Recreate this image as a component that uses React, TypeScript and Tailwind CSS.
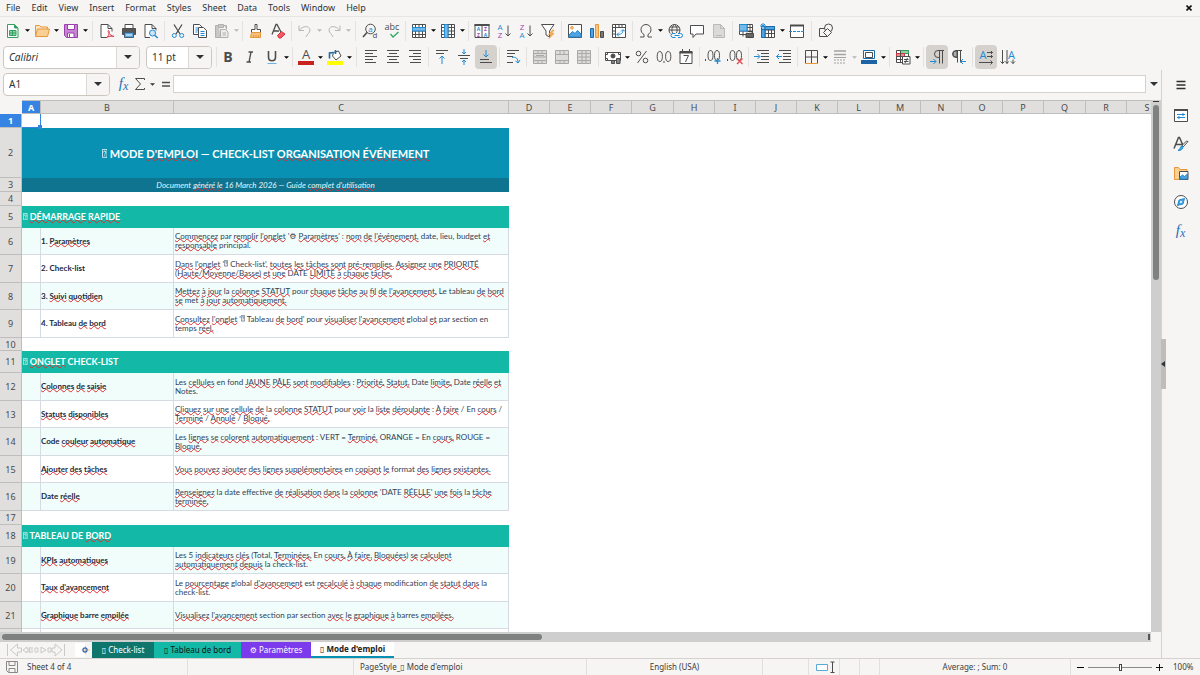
import { ReactNode } from 'react';
import { clsx } from 'clsx';

const INK = '#4d4d4d';
const BLUE = '#1e8bd4';
const ORANGE = '#e8973a';
const PURPLE = '#a33fb5';

const MENUS = ['File', 'Edit', 'View', 'Insert', 'Format', 'Styles', 'Sheet', 'Data', 'Tools', 'Window', 'Help'];

interface GlyphProps {
  children: ReactNode;
  className?: string;
}

function Glyph({ children, className }: GlyphProps) {
  return (
    <svg
      viewBox="0 0 16 16"
      className={clsx('size-4 shrink-0 overflow-visible', className)}
      fill="none"
      stroke={INK}
      strokeWidth="1"
      aria-hidden="true"
    >
      {children}
    </svg>
  );
}

interface LetterProps {
  x: number;
  y: number;
  size: number;
  fill?: string;
  bold?: boolean;
  children: ReactNode;
}

function Letter({ x, y, size, fill = INK, bold = false, children }: LetterProps) {
  return (
    <text
      x={x}
      y={y}
      fontSize={size}
      fill={fill}
      stroke="none"
      textAnchor="middle"
      fontWeight={bold ? 700 : 400}
      fontFamily="'Open Sans', 'Noto Sans', sans-serif"
    >
      {children}
    </text>
  );
}

const FX = (
  <Glyph>
    <text x="7.5" y="12" fontSize="15" fontStyle="italic" fill="#1c71b8" stroke="none" textAnchor="middle" fontFamily="'Liberation Serif', serif">
      f<tspan fontSize="12" dy="2">x</tspan>
    </text>
  </Glyph>
);

const ICONS: Record<string, ReactNode> = {
  new: (
    <Glyph>
      <path d="M2.5 1.5h7l3.500 3.500v9.500h-10.500z" fill="#fff" stroke="#33a060" />
      <path d="M9.500 1.500v3.500h3.500" fill="#33a060" stroke="#33a060" />
      <path d="M4.500 7.500h6.500v5h-6.500zM4.500 10h6.500M7.500 7.500v5" fill="#8fd3a9" stroke="#33a060" />
    </Glyph>
  ),
  open: (
    <Glyph>
      <path d="M1.500 12.500v-10h4l1.500 1.500h6.500v2.500" fill="#fbe3c0" stroke={ORANGE} />
      <path d="M1.500 13.500l2-7.500h12l-2 7.500z" fill="#f9cf94" stroke={ORANGE} />
    </Glyph>
  ),
  save: (
    <Glyph>
      <path d="M1.500 1.500h13v13h-11l-2-2z" fill="#c983d5" stroke="#9a3fac" />
      <path d="M4.500 1.500h7v5h-7zM4.500 14v-4h6.500v4" fill="#fff" stroke="#9a3fac" />
      <path d="M6.500 11v3" stroke="#9a3fac" />
    </Glyph>
  ),
  pdf: (
    <Glyph>
      <path d="M8 14.500h-6v-13h7l4 4v3" fill="#fff" />
      <path d="M9 1.500v4h4" />
      <path d="M7.500 14.500c3-2 3.500-7 2-7s.500 5 5.500 6c-2-1-6 0-7.500 1z" stroke="#dc3545" />
    </Glyph>
  ),
  print: (
    <Glyph>
      <path d="M4 5.500v-4h8v4" fill="#fff" />
      <path d="M1.500 5.500h13v6h-13z" fill="#555" />
      <path d="M3.500 9.500h9v5h-9z" fill="#5aa5dc" stroke="#3d5f78" />
      <path d="M5 12h6" stroke="#fff" />
    </Glyph>
  ),
  preview: (
    <Glyph>
      <path d="M7 14.500h-5v-13h7l4 4v2" fill="#fff" />
      <path d="M9 1.500v4h4" />
      <circle cx="9.500" cy="10" r="3" stroke={BLUE} fill="#cfe6f7" />
      <path d="M11.700 12.200l3 2.800" stroke={BLUE} strokeWidth="1.500" />
    </Glyph>
  ),
  cut: (
    <Glyph>
      <path d="M4 1.500l6 9.500M12 1.500l-6 9.500" strokeWidth="1.300" />
      <circle cx="4.300" cy="12.500" r="2" stroke={BLUE} />
      <circle cx="11.700" cy="12.500" r="2" stroke={BLUE} />
    </Glyph>
  ),
  copy: (
    <Glyph>
      <path d="M1.500 1.500h6l2.500 2.500v7.500h-8.500z" fill="#fff" />
      <path d="M3.500 5h3M3.500 7h3M3.500 9h2" stroke={BLUE} />
      <path d="M6.500 4.500h5l3 3v7h-8z" fill="#fff" />
      <path d="M8.500 8.500h4M8.500 10.500h4M8.500 12.500h4" stroke={BLUE} />
    </Glyph>
  ),
  paste: (
    <Glyph>
      <path d="M5 2.500h-3.500v12h5M10 2.500h2.500v4M4.500 1.500h5v3h-5z" fill="#c9c7c5" stroke="#b1afad" />
      <path d="M6.500 6.500h5l2.500 2.500v5.500h-7.500zM8.500 10h3.500M8.500 12h3.500" fill="#ededec" stroke="#b1afad" />
    </Glyph>
  ),
  clone: (
    <Glyph>
      <path d="M7 1.500h2v5h3.500v3h-9v-3h3.500z" fill="#fff" />
      <path d="M3.500 9.500h9v5h-10z" fill="#f6c17f" stroke={ORANGE} />
      <path d="M5.500 14v-2M8 14v-2M10.500 14v-2" stroke={ORANGE} />
    </Glyph>
  ),
  clear: (
    <Glyph>
      <path d="M2 11.500l4-10h1l4 7.500M4 8h5" strokeWidth="1.300" />
      <path d="M7.500 12.500l4-4 3.500 2.500-4 4h-2z" fill="#ef5b66" stroke="#d8323f" />
    </Glyph>
  ),
  undo: (
    <Glyph>
      <path d="M2 2.500v5h5M2.500 7c3-4 10-5 10.500 0 0 3-3 4-4 7" stroke="#b8b6b4" />
    </Glyph>
  ),
  redo: (
    <Glyph>
      <path d="M14 2.500v5h-5M13.500 7c-3-4-10-5-10.500 0 0 3 3 4 4 7" stroke="#b8b6b4" />
    </Glyph>
  ),
  find: (
    <Glyph>
      <circle cx="8.500" cy="6" r="4.800" />
      <path d="M5 9.500l-4 4.500" strokeWidth="1.600" />
      <Letter x={8.500} y={8.500} size={8} fill={BLUE}>a</Letter>
      <Letter x={13} y={15} size={8}>d</Letter>
    </Glyph>
  ),
  spell: (
    <Glyph>
      <Letter x={8} y={7} size={9}>abc</Letter>
      <path d="M6.500 11l2.500 3 5.500-5" stroke="#2fa866" strokeWidth="1.300" />
    </Glyph>
  ),
  row: (
    <Glyph>
      <path d="M1.500 1.500h13v13h-13zM1.500 4.500h13M1.500 8h13M1.500 11.500h13M4.500 1.500v13M8 1.500v13M11.500 1.500v13" fill="#fff" />
      <path d="M1.500 4.500h13v3.500h-13z" fill="#74b9ea" stroke={BLUE} />
    </Glyph>
  ),
  column: (
    <Glyph>
      <path d="M1.500 1.500h13v13h-13zM1.500 4.500h13M1.500 8h13M1.500 11.500h13M4.500 1.500v13M8 1.500v13M11.500 1.500v13" fill="#fff" />
      <path d="M4.500 1.500h3.500v13h-3.500z" fill="#74b9ea" stroke={BLUE} />
    </Glyph>
  ),
  sort: (
    <Glyph>
      <path d="M1 1.500h14v13h-14zM8 2v12.500" fill="#fff" />
      <path d="M.5 2h15" strokeWidth="2" />
      <Letter x={4.500} y={8} size={5} fill={BLUE} bold>A</Letter>
      <Letter x={4.500} y={14} size={5} fill={PURPLE} bold>Z</Letter>
      <Letter x={11.500} y={8} size={5} fill={PURPLE} bold>Z</Letter>
      <Letter x={11.500} y={14} size={5} fill={BLUE} bold>A</Letter>
    </Glyph>
  ),
  sortAsc: (
    <Glyph>
      <Letter x={4} y={6.500} size={8} fill={BLUE}>A</Letter>
      <Letter x={4} y={15} size={8} fill={PURPLE}>Z</Letter>
      <path d="M12 2.500v10.500M9.500 10.500l2.500 2.500 2.500-2.500" />
    </Glyph>
  ),
  sortDesc: (
    <Glyph>
      <Letter x={4} y={6.500} size={8} fill={PURPLE}>Z</Letter>
      <Letter x={4} y={15} size={8} fill={BLUE}>A</Letter>
      <path d="M12 2.500v10.500M9.500 10.500l2.500 2.500 2.500-2.500" />
    </Glyph>
  ),
  filter: (
    <Glyph>
      <path d="M1.500 1.500h12.500l-4.500 6.500v6l-3.500-2v-4z" fill="#fff" />
      <path d="M12.500 7l-4 4.500h2.500l-2 4 5-5h-2.500l2.500-3.500z" fill="#f7b55e" stroke={ORANGE} strokeWidth=".7" />
    </Glyph>
  ),
  image: (
    <Glyph>
      <path d="M1.500 1.500h13v13h-13z" fill="#fff" />
      <path d="M2 14v-2l3.500-3.500 2.500 2 2.500-3 3.500 3.500v3z" fill="#4ea3e0" stroke={BLUE} />
      <circle cx="5" cy="4.800" r="1.300" stroke={ORANGE} fill="#f9cf94" />
    </Glyph>
  ),
  chart: (
    <Glyph>
      <path d="M1.500 5.500h3v9h-3z" fill="#4ea3e0" stroke="#1a6ba8" />
      <path d="M6.500 1.500h3v13h-3z" fill="#f7c583" stroke={ORANGE} />
      <path d="M11.500 8.500h3v6h-3z" fill="#777" />
    </Glyph>
  ),
  pivot: (
    <Glyph>
      <path d="M1.500 1.500h13v13h-13zM1.500 4.500h13M4.500 1.500v13M8 1.500v3M11 1.500v3M1.500 8h3M1.500 11h3" fill="#fff" />
      <path d="M6 11.500c4 0 6-1 6-4.500M10 8.500l2-2 2 2M8 9.500l-2 2 2 2" stroke={BLUE} />
    </Glyph>
  ),
  omega: (
    <Glyph>
      <path d="M2 14h4v-2.500c-2-1-3-3-3-5 0-3 2.200-5 5-5s5 2 5 5c0 2-1 4-3 5v2.500h4" />
    </Glyph>
  ),
  link: (
    <Glyph>
      <circle cx="7.500" cy="7" r="5.500" />
      <path d="M2 7h11M7.500 1.500c-3.500 3-3.500 8 0 11M7.500 1.500c3.500 3 3.500 8 0 11M3 4h9" />
      <rect x="3.500" y="10" width="13" height="5" fill="#f6f5f4" stroke="none" />
      <path d="M8.500 10.500h-2.500a2 2 0 000 4h2.500M11 10.500h2.500a2 2 0 010 4h-2.500M7.500 12.500h5" stroke={BLUE} />
    </Glyph>
  ),
  comment: (
    <Glyph>
      <path d="M1.500 2.500h13v8.500h-7.500l-3 3.500v-3.500h-2.500z" fill="#fff" />
    </Glyph>
  ),
  headers: (
    <Glyph>
      <path d="M2.500 1.500h7l4 4v9h-11z" fill="#dcdad8" stroke="#bbb9b7" />
      <path d="M9.500 1.500v4h4M5 12.500h6" stroke="#bbb9b7" />
    </Glyph>
  ),
  printArea: (
    <Glyph>
      <path d="M1.500 1.500h13v10h-13zM1.500 4.500h13M1.500 8h13M5 1.500v12M9 1.500v8M12 1.500v8" fill="#fff" />
      <path d="M1.500 1.500h7.500v6.500h-7.500z" fill="#74b9ea" stroke={BLUE} />
      <path d="M8 10.500h7.500v4h-7.500z" fill="#666" />
      <path d="M10 8.500h4v2M10 14.500h4" stroke="#444" />
    </Glyph>
  ),
  freeze: (
    <Glyph>
      <path d="M1.500 3.500h13v11h-13zM1.500 7h13M1.500 10.500h13M5 3.500v11M8.500 3.500v11M11.500 3.500v11" fill="#fff" />
      <path d="M5 3.500h9.500v3h-9.500zM1.500 6.500h3.500v8h-3.500z" fill="#4ea3e0" stroke="#1a6ba8" />
      <path d="M3 0v6M0 3h6M1 1l4 4M5 1l-4 4" stroke={BLUE} />
    </Glyph>
  ),
  split: (
    <Glyph>
      <path d="M1.500 2.500h13v12h-13z" fill="#fff" />
      <path d="M1 2.500h14" strokeWidth="2" />
      <path d="M0 8.500h16" stroke={BLUE} strokeDasharray="3 1" />
    </Glyph>
  ),
  shapes: (
    <Glyph>
      <path d="M1.500 5.500h8v8h-8z" fill="#f6f5f4" />
      <circle cx="10.500" cy="5" r="4" fill="#f6f5f4" />
      <path d="M9.500 5.500l4 4-4 4-4-4z" fill="#f6f5f4" />
    </Glyph>
  ),
  bold: <Glyph><Letter x={8} y={13} size={14} bold>B</Letter></Glyph>,
  italic: (
    <Glyph>
      <path d="M6.500 3h4.500M4.500 13h4.500M9 3l-2 10" strokeWidth="1.300" />
    </Glyph>
  ),
  underline: (
    <Glyph>
      <path d="M4.500 2v6c0 5 7 5 7 0v-6" strokeWidth="1.600" />
      <path d="M3.500 14.500h9" stroke="#6cb2e6" />
    </Glyph>
  ),
  fontColor: (
    <Glyph>
      <Letter x={8} y={10} size={13}>A</Letter>
      <path d="M0 14h16" stroke="#c9211e" strokeWidth="4" />
    </Glyph>
  ),
  fill: (
    <Glyph>
      <path d="M6.500 3.500l5-1.500 2.500 5-5 4-3.500-4z" fill="#fff" />
      <path d="M8.500 5v-4M2.500 9.500v-5.500l4-.5" stroke="#1a6ba8" strokeWidth="1.600" />
      <path d="M0 14h16" stroke="#ffff00" strokeWidth="4" />
    </Glyph>
  ),
  alignLeft: <Glyph><path d="M2 1.500h12M2 4.500h8M2 7.500h12M2 10.500h8M2 13.500h11" /></Glyph>,
  alignCenter: <Glyph><path d="M2 1.500h12M4 4.500h8M2 7.500h12M4 10.500h8M2 13.500h12" /></Glyph>,
  alignRight: <Glyph><path d="M2 1.500h12M6 4.500h8M2 7.500h12M6 10.500h8M3 13.500h11" /></Glyph>,
  vTop: (
    <Glyph>
      <path d="M2 1.500h12M2 4.500h8" />
      <path d="M8 15v-8M5.500 9.500l2.500-2.500 2.500 2.500" stroke={BLUE} />
    </Glyph>
  ),
  vMiddle: (
    <Glyph>
      <path d="M2 6.500h12M4 9.500h8" />
      <path d="M8 0v5M6 3l2 2 2-2M8 16v-5M6 13l2-2 2 2" stroke={BLUE} />
    </Glyph>
  ),
  vBottom: (
    <Glyph>
      <path d="M2 10.500h9M2 13.500h12" />
      <path d="M8 1v7M5.500 5.500l2.500 2.500 2.500-2.500" stroke={BLUE} />
    </Glyph>
  ),
  wrap: (
    <Glyph>
      <path d="M2 1.500h12M2 4.500h8M2 7.500h6M2 13.500h6" />
      <path d="M7 8.500c4-1 6 1 6 5M10.500 12l2.500 2 2-3" stroke={BLUE} />
    </Glyph>
  ),
  mergeCenter: (
    <Glyph>
      <path d="M1.500 1.500h13v13h-13zM1.500 4.500h13M1.500 11.500h13M6 1.500v3M10 1.500v3M6 11.500v3M10 11.500v3M1.500 8h13M4 6.500h8" fill="#dedcda" stroke="#aaa8a6" />
    </Glyph>
  ),
  merge: (
    <Glyph>
      <path d="M1.500 1.500h13v13h-13zM1.500 5.500h13M1.500 11.500h13M6 1.500v4M10 1.500v4M6 11.500v3M10 11.500v3" fill="#dedcda" stroke="#aaa8a6" />
    </Glyph>
  ),
  unmerge: (
    <Glyph>
      <path d="M1.500 1.500h13v13h-13zM1.500 4.500h13M1.500 8h13M1.500 11.500h13M6 1.500v13M10 1.500v13" fill="#dedcda" stroke="#aaa8a6" />
    </Glyph>
  ),
  currency: (
    <Glyph>
      <path d="M.5 3.500h15v8h-15z" fill="#fff" />
      <path d="M.5 5.500h2v-2M13.500 3.500v2h2M.5 9.500h2v2" />
      <circle cx="8" cy="7" r="2" fill={INK} />
      <path d="M6.500 14.500v-3h3v3zM11.500 14.500v-5h3.500v5z" fill="#888" />
    </Glyph>
  ),
  percent: (
    <Glyph>
      <circle cx="4.500" cy="4.500" r="2.300" />
      <circle cx="11.500" cy="11.500" r="2.300" />
      <path d="M12.500 2l-9 12" />
    </Glyph>
  ),
  number: (
    <Glyph>
      <ellipse cx="3.800" cy="7.500" rx="2.600" ry="5" />
      <ellipse cx="12.200" cy="7.500" rx="2.600" ry="5" />
      <path d="M8 12v2" />
    </Glyph>
  ),
  date: (
    <Glyph>
      <path d="M2 2.500h12v12h-12z" fill="#fff" />
      <path d="M1.500 3.500h13" strokeWidth="2" />
      <path d="M4.500 0v2M11.500 0v2" />
      <path d="M5.500 6.500h5l-3 6.500" />
    </Glyph>
  ),
  addDecimal: (
    <Glyph>
      <ellipse cx="5.500" cy="6.500" rx="2.500" ry="5" />
      <ellipse cx="12" cy="6.500" rx="2.500" ry="5" />
      <path d="M.5 10v2" />
      <path d="M12.500 9v6M9.500 12h6" stroke={BLUE} strokeWidth="1.300" />
    </Glyph>
  ),
  deleteDecimal: (
    <Glyph>
      <ellipse cx="5.500" cy="6.500" rx="2.500" ry="5" />
      <ellipse cx="12" cy="6.500" rx="2.500" ry="5" />
      <path d="M.5 10v2" />
      <path d="M10 9.500l5.500 5.500M15.500 9.500l-5.500 5.500" stroke="#e5484d" strokeWidth="1.300" />
    </Glyph>
  ),
  indent: (
    <Glyph>
      <path d="M3 1.500h12M7 4.500h8M7 7.500h8M7 10.500h8M3 13.500h12" />
      <path d="M0 7.500h5.500M3.500 5l2.500 2.500-2.500 2.500" stroke={BLUE} />
    </Glyph>
  ),
  outdent: (
    <Glyph>
      <path d="M3 1.500h12M7 4.500h8M7 7.500h8M7 10.500h8M3 13.500h12" />
      <path d="M6 7.500h-5.500M3 5l-2.500 2.500 2.500 2.500" stroke={BLUE} />
    </Glyph>
  ),
  borders: (
    <Glyph>
      <path d="M2.500 14v-12.500h12v12.500M8.500 1.500v12.500M2.500 8h12" />
      <path d="M2 14.500h13" stroke={ORANGE} />
    </Glyph>
  ),
  borderStyle: (
    <Glyph>
      <path d="M2 2h12M2 5.500h12" stroke="#a5a3a1" strokeWidth="1.500" />
      <path d="M2 8.500h12" stroke="#a5a3a1" />
      <path d="M2 11h12M2 14h12" stroke="#a5a3a1" strokeDasharray="2 1" />
    </Glyph>
  ),
  borderColor: (
    <Glyph>
      <path d="M2.500 1.500h11v8h-11z" fill="#fff" stroke="#1a6ba8" />
      <path d="M4.500 3.500h7v5h-7z" />
      <path d="M0 13h16" stroke="#1b63a5" strokeWidth="4" />
    </Glyph>
  ),
  conditional: (
    <Glyph>
      <path d="M1.500 1.500h12v12h-12z" fill="#fff" />
      <path d="M5.500 1.500h8v3h-8z" fill="#8ed0a0" stroke="#33a060" />
      <path d="M1.500 4.500h8v3h-8z" fill="#ef8a8f" stroke="#c9333f" />
      <path d="M1.500 7.500h8v3h-8zM5.500 1.500v12" />
      <path d="M7.500 7.500h7.500v7.500h-7.500z" fill="#fff" />
      <path d="M9 10.500h4.500M9 12.500h4.500M12.500 9l-2.500 5" />
    </Glyph>
  ),
  ltr: (
    <Glyph>
      <path d="M15 1.500h-6a3.500 3.500 0 000 7h1M10.500 1.500v13M13.500 1.500v13" />
      <path d="M1 12.500h6M4.500 10l2.500 2.500-2.500 2.500" stroke={BLUE} />
    </Glyph>
  ),
  rtl: (
    <Glyph>
      <path d="M11 1.500h-6a3.500 3.500 0 000 7h1M6.500 1.500v12M9.500 1.500v12" />
      <path d="M6 2h-1a3 3 0 000 6h1z" fill="#aaa" />
      <path d="M15 12.500h-5M12 10l-2.500 2.500 2.500 2.500" stroke={BLUE} />
    </Glyph>
  ),
  textLR: (
    <Glyph>
      <Letter x={5} y={10} size={11} fill={BLUE}>A</Letter>
      <path d="M9 3.500h5.500M13 2l1.500 1.500-1.500 1.500M9 7.500h5.500M13 6l1.500 1.500-1.500 1.500M1 13.500h13.500M12.500 11.500l2 2-2 2" />
    </Glyph>
  ),
  textTB: (
    <Glyph>
      <Letter x={11.500} y={10} size={11} fill={BLUE}>A</Letter>
      <path d="M2.500 1v13.500M.5 12.500l2 2 2-2M7 1v13.500M5.500 12.500l1.500 2 1.500-2M13 10.500v4M11 12.500l2 2 2-2" />
    </Glyph>
  ),
  properties: (
    <Glyph>
      <path d="M1.500 2.500h13v12h-13z" fill="#fff" />
      <path d="M1 3h14" strokeWidth="2" />
      <path d="M4 7.500h8M4 10.500h8M10 6v3M6 9v3" stroke={BLUE} />
    </Glyph>
  ),
  styles: (
    <Glyph>
      <path d="M1 12.500l4.500-11h1l4 9M3 8.500h6" strokeWidth="1.500" />
      <path d="M15 5.500l-4.500 5-1.500-1 4.500-4.500z" fill="#fff" />
      <path d="M10 10.500c0 3-2 4-5 4 2-1 2-3 3.500-4.500z" fill="#4ea3e0" stroke={BLUE} />
    </Glyph>
  ),
  gallery: (
    <Glyph>
      <path d="M1.500 14.500v-12h4l1.500 2h7v3h-6l-2 7z" fill="#f9cf94" stroke={ORANGE} />
      <path d="M6.500 6.500h8.500v8h-8.500z" fill="#fff" />
      <path d="M7 14v-2l2.500-2 2 1.500 3-2.500v5z" fill="#4ea3e0" stroke={BLUE} />
    </Glyph>
  ),
  navigator: (
    <Glyph>
      <circle cx="8" cy="8" r="6.500" fill="#fff" />
      <path d="M11.500 4.500l-1.500 5.500-5.500 1.500 1.500-5.500z" fill="#4ea3e0" stroke={BLUE} />
      <circle cx="8" cy="8" r="1" fill="#fff" stroke="none" />
    </Glyph>
  ),
  fx: FX,
  sum: (
    <Glyph>
      <path d="M12.500 4v-1.500h-9l5 5.500-5 5.500h9v-1.500" />
    </Glyph>
  ),
  equals: (
    <Glyph>
      <path d="M4 6.500h8M4 10h8" strokeWidth="1.600" />
    </Glyph>
  ),
  menu: (
    <Glyph>
      <path d="M3.500 4.500h9M3.500 8h9M3.500 11.500h9" stroke="#2e2e2e" strokeWidth="1.600" />
    </Glyph>
  ),
};

interface Tool {
  icon: string;
  label: string;
  menu?: boolean;
  disabled?: boolean;
  pressed?: boolean;
}

interface ToolGroup {
  tools: Tool[];
  wide?: boolean;
}

const STANDARD: ToolGroup[] = [
  {
    tools: [
      { icon: 'new', label: 'New', menu: true },
      { icon: 'open', label: 'Open', menu: true },
      { icon: 'save', label: 'Save', menu: true },
    ],
    wide: true,
  },
  {
    tools: [
      { icon: 'pdf', label: 'Export as PDF' },
      { icon: 'print', label: 'Print' },
      { icon: 'preview', label: 'Print Preview' },
    ],
  },
  {
    tools: [
      { icon: 'cut', label: 'Cut' },
      { icon: 'copy', label: 'Copy' },
      { icon: 'paste', label: 'Paste', menu: true, disabled: true },
    ],
  },
  {
    tools: [
      { icon: 'clone', label: 'Clone Formatting' },
      { icon: 'clear', label: 'Clear Formatting' },
    ],
  },
  {
    tools: [
      { icon: 'undo', label: 'Undo', menu: true, disabled: true },
      { icon: 'redo', label: 'Redo', menu: true, disabled: true },
    ],
    wide: true,
  },
  {
    tools: [
      { icon: 'find', label: 'Find and Replace' },
      { icon: 'spell', label: 'Spelling' },
    ],
  },
  {
    tools: [
      { icon: 'row', label: 'Row', menu: true },
      { icon: 'column', label: 'Column', menu: true },
    ],
  },
  {
    tools: [
      { icon: 'sort', label: 'Sort' },
      { icon: 'sortAsc', label: 'Sort Ascending' },
      { icon: 'sortDesc', label: 'Sort Descending' },
      { icon: 'filter', label: 'AutoFilter' },
    ],
  },
  {
    tools: [
      { icon: 'image', label: 'Insert Image' },
      { icon: 'chart', label: 'Insert Chart' },
      { icon: 'pivot', label: 'Pivot Table' },
    ],
  },
  {
    tools: [
      { icon: 'omega', label: 'Special Character', menu: true },
      { icon: 'link', label: 'Hyperlink' },
      { icon: 'comment', label: 'Comment' },
      { icon: 'headers', label: 'Headers and Footers', disabled: true },
    ],
  },
  {
    tools: [
      { icon: 'printArea', label: 'Define Print Area' },
      { icon: 'freeze', label: 'Freeze Rows and Columns', menu: true },
      { icon: 'split', label: 'Split Window' },
    ],
    wide: true,
  },
  { tools: [{ icon: 'shapes', label: 'Draw Functions' }] },
];

const FORMATTING: ToolGroup[] = [
  {
    tools: [
      { icon: 'bold', label: 'Bold' },
      { icon: 'italic', label: 'Italic' },
      { icon: 'underline', label: 'Underline', menu: true },
    ],
  },
  {
    tools: [
      { icon: 'fontColor', label: 'Font Color', menu: true },
      { icon: 'fill', label: 'Background Color', menu: true },
    ],
    wide: true,
  },
  {
    tools: [
      { icon: 'alignLeft', label: 'Align Left' },
      { icon: 'alignCenter', label: 'Align Center' },
      { icon: 'alignRight', label: 'Align Right' },
    ],
  },
  {
    tools: [
      { icon: 'vTop', label: 'Align Top' },
      { icon: 'vMiddle', label: 'Center Vertically' },
      { icon: 'vBottom', label: 'Align Bottom', pressed: true },
    ],
  },
  { tools: [{ icon: 'wrap', label: 'Wrap Text' }] },
  {
    tools: [
      { icon: 'mergeCenter', label: 'Merge and Center', disabled: true },
      { icon: 'merge', label: 'Merge Cells', disabled: true },
      { icon: 'unmerge', label: 'Unmerge Cells', disabled: true },
    ],
    wide: true,
  },
  {
    tools: [
      { icon: 'currency', label: 'Format as Currency', menu: true },
      { icon: 'percent', label: 'Format as Percent' },
      { icon: 'number', label: 'Format as Number' },
      { icon: 'date', label: 'Format as Date' },
    ],
  },
  {
    tools: [
      { icon: 'addDecimal', label: 'Add Decimal Place' },
      { icon: 'deleteDecimal', label: 'Delete Decimal Place' },
    ],
  },
  {
    tools: [
      { icon: 'indent', label: 'Increase Indent' },
      { icon: 'outdent', label: 'Decrease Indent' },
    ],
  },
  {
    tools: [
      { icon: 'borders', label: 'Borders', menu: true },
      { icon: 'borderStyle', label: 'Border Style', menu: true, disabled: true },
      { icon: 'borderColor', label: 'Border Color', menu: true },
    ],
  },
  { tools: [{ icon: 'conditional', label: 'Conditional', menu: true }] },
  {
    tools: [
      { icon: 'ltr', label: 'Left-To-Right', pressed: true },
      { icon: 'rtl', label: 'Right-To-Left' },
    ],
  },
  {
    tools: [
      { icon: 'textLR', label: 'Text direction from left to right', pressed: true },
      { icon: 'textTB', label: 'Text direction from top to bottom' },
    ],
  },
];

function Caret({ className }: { className?: string }) {
  return (
    <svg viewBox="0 0 8 4" className={clsx('shrink-0 fill-current', className)} aria-hidden="true">
      <path d="M0 0h8l-4 4z" />
    </svg>
  );
}

function ToolButton({ icon, label, menu, disabled, pressed }: Tool) {
  return (
    <>
      <button
        type="button"
        aria-label={label}
        aria-pressed={pressed}
        disabled={disabled}
        className={clsx('flex h-6 w-[22px] shrink-0 items-center justify-center rounded', pressed && 'bg-[#d5d1cd]')}
      >
        {ICONS[icon]}
      </button>
      {menu && (
        <button
          type="button"
          aria-label={`${label} options`}
          disabled={disabled}
          className={clsx('flex h-6 w-[7px] shrink-0 items-center justify-center', disabled ? 'text-[#b8b6b4]' : 'text-black')}
        >
          <Caret className="h-[3px] w-[5px]" />
        </button>
      )}
    </>
  );
}

function Toolbar({ groups }: { groups: ToolGroup[] }) {
  return (
    <>
      {groups.map((group, i) => (
        <div key={i} className="flex shrink-0 items-center">
          {group.tools.map((tool) => (
            <ToolButton key={tool.icon} {...tool} />
          ))}
          {i < groups.length - 1 && (
            <div className={clsx('flex h-5 justify-center', group.wide ? 'w-[7px]' : 'w-[5px]')}>
              <div className="w-px bg-[#e4e2e0]" />
            </div>
          )}
        </div>
      ))}
    </>
  );
}

interface ComboProps {
  label: string;
  value: string;
  className: string;
  italic?: boolean;
}

function Combo({ label, value, className, italic }: ComboProps) {
  return (
    <div className={clsx('relative h-[23px] shrink-0 overflow-hidden rounded border border-[#cdc7c2] bg-white', className)}>
      <select
        aria-label={label}
        className={clsx('block h-[21px] w-full appearance-none bg-transparent pl-[5px] text-[10px] leading-[14px]', italic && 'italic')}
      >
        <option>{value}</option>
      </select>
      <div className="pointer-events-none absolute inset-y-0 right-0 flex w-[23px] items-center justify-center border-l border-[#dcd8d5] bg-[#f6f5f4]">
        <Caret className="h-1 w-2" />
      </div>
    </div>
  );
}

function Missing() {
  return (
    <svg viewBox="0 0 5 8" className="inline-block h-[0.8em] w-[0.5em] fill-none stroke-current align-baseline" aria-hidden="true">
      <path d="M.4.400h4.200v7.200h-4.200z" strokeWidth=".7" />
      <path d="M1.500 3c0-1.500 2-1.500 2 0 0 1-1 1-1 2M2.500 5.700v.8" strokeWidth=".8" />
    </svg>
  );
}

// Text between tildes is flagged by the spell checker, ^ is a glyph that the font lacks.
function Spelled({ text }: { text: string }) {
  const nodes: ReactNode[] = [];
  let flagged = false;

  text.split(/([~^])/).forEach((part, i) => {
    if (part === '~') {
      flagged = !flagged;
    } else if (part === '^') {
      nodes.push(<Missing key={i} />);
    } else if (flagged) {
      nodes.push(
        <span
          key={i}
          className="underline decoration-[#e02b2b] decoration-wavy decoration-1 [text-decoration-skip-ink:none] [text-underline-offset:-1px]"
        >
          {part}
        </span>
      );
    } else {
      nodes.push(part);
    }
  });

  return <>{nodes}</>;
}

interface Row {
  height: string;
  kind: 'blank' | 'title' | 'subtitle' | 'section' | 'item';
  tinted?: boolean;
  label?: string;
  lines?: string[];
}

const ROWS: Row[] = [
  { height: 'h-[14px]', kind: 'blank' },
  { height: 'h-[50px]', kind: 'title', label: "^ MODE ~D'EMPLOI~ — CHECK-LIST ~ORGANISATION~ ~ÉVÉNEMENT~" },
  { height: 'h-[14px]', kind: 'subtitle', label: "Document ~généré~ ~le~ 16 March 2026 — Guide ~complet~ ~d'utilisation~" },
  { height: 'h-[14px]', kind: 'blank' },
  { height: 'h-[22px]', kind: 'section', label: '^ ~DÉMARRAGE~ ~RAPIDE~' },
  {
    height: 'h-[27px]', kind: 'item', tinted: true, label: '1. ~Paramètres~',
    lines: ["~Commencez~ par ~remplir~ ~l'onglet~ '⚙ ~Paramètres~' : ~nom~ ~de~ ~l'événement,~ date, lieu, budget ~et~", '~responsable~ principal.'],
  },
  {
    height: 'h-[28px]', kind: 'item', label: '2. Check-list',
    lines: ["~Dans~ ~l'onglet~ '^ Check-list', ~toutes~ ~les~ ~tâches~ ~sont~ ~pré-remplies.~ ~Assignez~ ~une~ ~PRIORITÉ~", '(~Haute/Moyenne/Basse)~ ~et~ ~une~ DATE ~LIMITE~ ~à~ ~chaque~ ~tâche.~'],
  },
  {
    height: 'h-[27px]', kind: 'item', tinted: true, label: '3. ~Suivi~ ~quotidien~',
    lines: ["~Mettez~ ~à~ ~jour~ la ~colonne~ ~STATUT~ pour ~chaque~ ~tâche~ ~au~ ~fil~ ~de~ ~l'avancement.~ Le tableau ~de~ ~bord~", '~se~ met ~à~ ~jour~ ~automatiquement.~'],
  },
  {
    height: 'h-[28px]', kind: 'item', label: '4. Tableau ~de~ ~bord~',
    lines: ["~Consultez~ ~l'onglet~ '^ Tableau ~de~ ~bord~' pour ~visualiser~ ~l'avancement~ global ~et~ par section en", 'temps ~réel.~'],
  },
  { height: 'h-[13px]', kind: 'blank' },
  { height: 'h-[22px]', kind: 'section', label: '^ ~ONGLET~ CHECK-LIST' },
  {
    height: 'h-[28px]', kind: 'item', tinted: true, label: '~Colonnes~ ~de~ ~saisie~',
    lines: ['Les ~cellules~ en fond ~JAUNE~ ~PÂLE~ ~sont~ ~modifiables~ : ~Priorité,~ ~Statut,~ Date ~limite,~ Date ~réelle~ ~et~', 'Notes.'],
  },
  {
    height: 'h-[27px]', kind: 'item', label: '~Statuts~ ~disponibles~',
    lines: ['~Cliquez~ ~sur~ ~une~ ~cellule~ ~de~ la ~colonne~ ~STATUT~ pour ~voir~ la ~liste~ ~déroulante~ : ~À~ ~faire~ / En ~cours~ /', '~Terminé~ / ~Annulé~ / ~Bloqué.~'],
  },
  {
    height: 'h-[28px]', kind: 'item', tinted: true, label: 'Code ~couleur~ ~automatique~',
    lines: ['Les ~lignes~ ~se~ ~colorent~ ~automatiquement~ : VERT = ~Terminé,~ ORANGE = En ~cours,~ ROUGE =', '~Bloqué.~'],
  },
  {
    height: 'h-[27px]', kind: 'item', label: '~Ajouter~ ~des~ ~tâches~',
    lines: ['~Vous~ ~pouvez~ ~ajouter~ ~des~ ~lignes~ ~supplémentaires~ en ~copiant~ ~le~ format ~des~ ~lignes~ ~existantes.~'],
  },
  {
    height: 'h-[28px]', kind: 'item', tinted: true, label: 'Date ~réelle~',
    lines: ["~Renseignez~ la date effective ~de~ ~réalisation~ ~dans~ la ~colonne~ 'DATE ~RÉELLE~' ~une~ ~fois~ la ~tâche~", '~terminée.~'],
  },
  { height: 'h-[14px]', kind: 'blank' },
  { height: 'h-[22px]', kind: 'section', label: '^ TABLEAU DE ~BORD~' },
  {
    height: 'h-[27px]', kind: 'item', tinted: true, label: '~KPIs~ ~automatiques~',
    lines: ['Les 5 ~indicateurs~ ~clés~ (Total, ~Terminées,~ En ~cours,~ ~À~ ~faire,~ ~Bloquées~) ~se~ ~calculent~', '~automatiquement~ ~depuis~ la check-list.'],
  },
  {
    height: 'h-[28px]', kind: 'item', label: "~Taux~ ~d'avancement~",
    lines: ["Le ~pourcentage~ global ~d'avancement~ est ~recalculé~ ~à~ ~chaque~ modification ~de~ ~statut~ ~dans~ la", 'check-list.'],
  },
  {
    height: 'h-[27px]', kind: 'item', tinted: true, label: '~Graphique~ barre ~empilée~',
    lines: ["~Visualisez~ ~l'avancement~ section par section ~avec~ ~le~ ~graphique~ ~à~ barres ~empilées.~"],
  },
  { height: 'h-[28px]', kind: 'item' },
];

const COLUMNS = [
  { name: 'A', width: 'w-[19px]' },
  { name: 'B', width: 'w-[133px]' },
  { name: 'C', width: 'w-[335px]' },
  ...'DEFGHIJKLMNOPQRS'.split('').map((name) => ({
    name,
    width: 'GLQ'.includes(name) ? 'w-[42px]' : 'w-[41px]',
  })),
];

function RowCells({ row, first }: { row: Row; first: boolean }) {
  if (row.kind === 'title') {
    return (
      <td colSpan={3} className="bg-[#0891b2] p-0 text-center text-[11px] font-bold text-white">
        <Spelled text={row.label ?? ''} />
      </td>
    );
  }
  if (row.kind === 'subtitle') {
    return (
      <td colSpan={3} className="bg-[#0e7490] p-0 text-center italic text-[#e0f7fb]">
        <Spelled text={row.label ?? ''} />
      </td>
    );
  }
  if (row.kind === 'section') {
    return (
      <td colSpan={3} className="bg-[#14b8a6] p-0 pb-px pl-px text-[9px] font-bold text-white">
        <Spelled text={row.label ?? ''} />
      </td>
    );
  }
  if (row.kind === 'item') {
    const cell = clsx('border-r border-b border-[#d5dbe0] p-0', row.tinted && 'bg-[#f0fdfa]');
    return (
      <>
        <td className={cell} />
        <td className={clsx(cell, 'font-bold text-[#1e293b]')}>
          <Spelled text={row.label ?? ''} />
        </td>
        <td className={clsx(cell, 'pl-px text-[#334155]')}>
          {row.lines?.map((line) => (
            <div key={line}>
              <Spelled text={line} />
            </div>
          ))}
        </td>
      </>
    );
  }
  return (
    <>
      <td className="relative p-0">
        {first && (
          <div className="absolute inset-0 border-r border-b border-[#3584e4]">
            <div className="absolute -right-[2px] -bottom-[2px] size-1 bg-[#3584e4]" />
          </div>
        )}
      </td>
      <td className="p-0" />
      <td className="p-0" />
    </>
  );
}

function Grid() {
  return (
    <div className="min-h-0 min-w-0 flex-1 overflow-hidden bg-white">
      <table className="w-max table-fixed border-separate border-spacing-0 font-[Lato,'DejaVu_Sans',sans-serif] text-[8px] leading-[9px] whitespace-nowrap">
        <colgroup>
          <col className="w-[22px]" />
          {COLUMNS.map((col) => (
            <col key={col.name} className={col.width} />
          ))}
        </colgroup>
        <thead className="font-['Noto_Sans',sans-serif] text-[9px] text-[#4a4a4a]">
          <tr>
            <td className="h-[14px] bg-[#f6f5f4] p-0" />
            {COLUMNS.map((col, i) => (
              <th
                key={col.name}
                scope="col"
                className={clsx(
                  'h-[14px] border-r border-y border-[#c0bebc] p-0 text-center',
                  i === 0 ? 'bg-[#3584e4] font-bold text-white' : 'bg-[#e0dfdd] font-normal'
                )}
              >
                {col.name}
              </th>
            ))}
          </tr>
        </thead>
        <tbody>
          {ROWS.map((row, i) => (
            <tr key={i}>
              <th
                scope="row"
                className={clsx(
                  "border-r border-b border-[#c0bebc] p-0 text-center font-['Noto_Sans',sans-serif] text-[9px]",
                  row.height,
                  i === 0 ? 'bg-[#3584e4] font-bold text-white' : 'bg-[#e0dfdd] font-normal text-[#4a4a4a]'
                )}
              >
                {i + 1}
              </th>
              <RowCells row={row} first={i === 0} />
            </tr>
          ))}
        </tbody>
      </table>
    </div>
  );
}

const SHEETS = [
  { name: '▯ Check-list', style: 'bg-[#0f766e] text-white w-[62px]' },
  { name: '▯ Tableau de bord', style: 'bg-[#14b8a6] text-[#111] w-[87px]' },
  { name: '⚙ Paramètres', style: 'bg-[#7c3aed] text-white w-[70px]' },
  { name: "▯ Mode d'emploi", style: 'bg-white font-bold text-[#222] border-b-2 border-[#0891b2] w-[83px]' },
];

function SheetTabs() {
  return (
    <div className="flex h-4 shrink-0 items-stretch pl-[6px]">
      <svg viewBox="0 0 60 14" className="my-px h-[14px] w-[60px]" fill="none" stroke="#cbc9c7" aria-hidden="true">
        <path d="M1.500 1v12M11.500 1l-7 6 7 6v-4h4v-4h-4z" />
        <path d="M21 4l-4 3 4 3v-2h3v2l-1-3 1-3v2h-3zM26 4v6M29 5h3v4h-3zM35 4l5 3-5 3zM42 5h3v4h-3z" />
        <path d="M49 1l7 6-7 6v-4h-3v-4h3zM58.500 1v12" />
      </svg>
      <button type="button" aria-label="Add Sheet" className="mr-px ml-[8px] flex w-[17px] items-center justify-center">
        <svg viewBox="0 0 16 14" className="h-[14px] w-4" fill="none" aria-hidden="true">
          <path d="M0 0h10v14h-10z" fill="#fff" />
          <path d="M10.500 3v8M6.500 7h8" stroke="#f6c17f" />
          <circle cx="10" cy="7" r="2" stroke="#3d6fb5" strokeWidth="1.300" />
        </svg>
      </button>
      {SHEETS.map((sheet) => (
        <button key={sheet.name} type="button" className={clsx('text-center text-[8px] leading-[14px] whitespace-nowrap', sheet.style)}>
          {sheet.name}
        </button>
      ))}
    </div>
  );
}

function StatusBar() {
  const cell = 'flex items-center justify-center border-r border-[#e2e0de]';
  return (
    <footer className="flex h-[17px] shrink-0 items-stretch border-t border-[#d5d1cd] text-[8px] text-[#3c3c3c]">
      <div className="flex w-[188px] shrink-0 items-center border-r border-[#e2e0de] pl-1">
        <Glyph>
          <path d="M2.500 2.500h11v11h-9l-2-2zM5 2.500v4h6v-4M5 13.500v-4h6v4" stroke="#8a8886" />
        </Glyph>
        <span className="ml-[7px]">Sheet 4 of 4</span>
      </div>
      <div className={clsx(cell, 'w-[166px] shrink-0')} />
      <div className="flex w-[233px] shrink-0 items-center border-r border-[#e2e0de] pl-[6px]">PageStyle_▯ Mode d'emploi</div>
      <div className={clsx(cell, 'min-w-0 flex-1')}>English (USA)</div>
      <div className={clsx(cell, 'w-[46px]')} />
      <div className={clsx(cell, 'w-[31px] pl-1')}>
        <svg viewBox="0 0 20 12" className="h-3 w-5" fill="none" aria-hidden="true">
          <path d="M.5 3.500h11v6h-11z" stroke="#5aa9d6" fill="#fff" />
          <path d="M14.500 1h4M14.500 11.500h4M16.500 1v10.500" stroke={INK} />
        </svg>
      </div>
      <div className={clsx(cell, 'w-5')} />
      <div className={clsx(cell, 'w-5')} />
      <div className={clsx(cell, 'w-[191px]')}>Average: ; Sum: 0</div>
      <div className="flex w-[96px] items-center gap-1 pl-[6px]">
        <button type="button" aria-label="Zoom Out" className="flex h-3 w-[7px] items-center">
          <span className="h-px w-full bg-black" />
        </button>
        <input
          type="range"
          aria-label="Zoom"
          defaultValue={50}
          className="h-px w-16 appearance-none bg-[#8a8886] [&::-webkit-slider-thumb]:h-[7px] [&::-webkit-slider-thumb]:w-[3px] [&::-webkit-slider-thumb]:appearance-none [&::-webkit-slider-thumb]:border [&::-webkit-slider-thumb]:border-[#444] [&::-webkit-slider-thumb]:bg-white"
        />
        <button type="button" aria-label="Zoom In" className="flex h-3 w-[7px] items-center">
          <svg viewBox="0 0 7 7" className="size-[7px]" stroke="#111" aria-hidden="true">
            <path d="M0 3.500h7M3.500 0v7" />
          </svg>
        </button>
      </div>
      <div className="flex w-[33px] items-center pl-[6px]">100%</div>
    </footer>
  );
}

const SIDEBAR: Tool[] = [
  { icon: 'properties', label: 'Properties' },
  { icon: 'styles', label: 'Styles' },
  { icon: 'gallery', label: 'Gallery' },
  { icon: 'navigator', label: 'Navigator' },
  { icon: 'fx', label: 'Functions' },
];

export default function App() {
  return (
    <div className="flex h-screen flex-col overflow-hidden bg-[#f6f5f4] font-['Noto_Sans','DejaVu_Sans',sans-serif] text-[#2e3436]">
      <nav className="flex h-[17px] shrink-0 items-center gap-[11px] border-b border-[#e8e6e4] pl-[6px] text-[9px]">
        {MENUS.map((name) => (
          <button key={name} type="button">{name}</button>
        ))}
        <button type="button" aria-label="Close" className="mr-2 ml-auto">
          <svg viewBox="0 0 6 6" className="size-[6px]" stroke="#111" strokeWidth="1.600" aria-hidden="true">
            <path d="M.5.500l5 5M5.500.500l-5 5" />
          </svg>
        </button>
      </nav>

      <div className="flex h-[27px] shrink-0 items-center pl-[2px]">
        <Toolbar groups={STANDARD} />
      </div>
      <div className="flex h-[26px] shrink-0 items-center pl-[3px]">
        <Combo label="Font Name" value="Calibri" className="mr-[6px] w-[137px]" italic />
        <Combo label="Font Size" value="11 pt" className="w-[66px]" />
        <div className="flex h-5 w-[5px] justify-end">
          <div className="w-px bg-[#e4e2e0]" />
        </div>
        <Toolbar groups={FORMATTING} />
      </div>

      <div className="flex min-h-0 flex-1">
        <div className="flex min-w-0 flex-1 flex-col">
          <div className="mb-[2px] flex h-7 shrink-0 items-center pl-[3px]">
            <Combo label="Name Box" value="A1" className="mr-[3px] w-[107px]" />
            <ToolButton icon="fx" label="Function Wizard" />
            <button type="button" aria-label="Select Function" className="flex w-[10px] justify-center">{ICONS.sum}</button>
            <button type="button" aria-label="Function list" className="flex w-[14px] justify-center">
              <Caret className="h-[3px] w-[5px]" />
            </button>
            <button type="button" aria-label="Formula" className="flex w-[14px] justify-center">{ICONS.equals}</button>
            <input aria-label="Input line" className="h-[18px] min-w-0 flex-1 border border-[#d5d1cd] bg-white px-1 text-[10px]" />
            <button type="button" aria-label="Expand Formula Bar" className="flex w-[15px] justify-center">
              <Caret className="h-1 w-2" />
            </button>
          </div>

          <div className="flex min-h-0 flex-1">
            <Grid />
            <div className="flex w-[10px] shrink-0 flex-col items-center bg-[#cecece]">
              <div className="mt-px h-px w-[6px] bg-[#333]" />
              <div className="mt-[3px] h-[175px] w-[6px] rounded-full bg-[#7f8080]" />
            </div>
          </div>
          <div className="flex h-[10px] shrink-0 items-center pr-[10px]">
            <div className="flex h-full flex-1 items-center justify-between bg-[#cecece] pr-px pl-[2px]">
              <div className="h-[6px] w-[47%] rounded-full bg-[#7f8080]" />
              <div className="h-[6px] w-[2px] bg-[#555]" />
            </div>
          </div>
          <SheetTabs />
        </div>

        <aside className="relative flex w-[39px] shrink-0 flex-col items-center border-l border-[#d5d1cd]">
          <button type="button" aria-label="Sidebar Settings" className="flex h-[30px] items-center">{ICONS.menu}</button>
          {SIDEBAR.map((tool) => (
            <button key={tool.icon} type="button" aria-label={tool.label} className="flex h-[29px] items-center">
              {ICONS[tool.icon]}
            </button>
          ))}
          <div className="absolute top-[269px] left-[-1px] flex h-[50px] w-[5px] items-center bg-[#bfbdbb]">
            <svg viewBox="0 0 4 6" className="h-[6px] w-1 fill-[#333]" aria-hidden="true">
              <path d="M0 3l4-3v6z" />
            </svg>
          </div>
        </aside>
      </div>

      <StatusBar />
    </div>
  );
}
